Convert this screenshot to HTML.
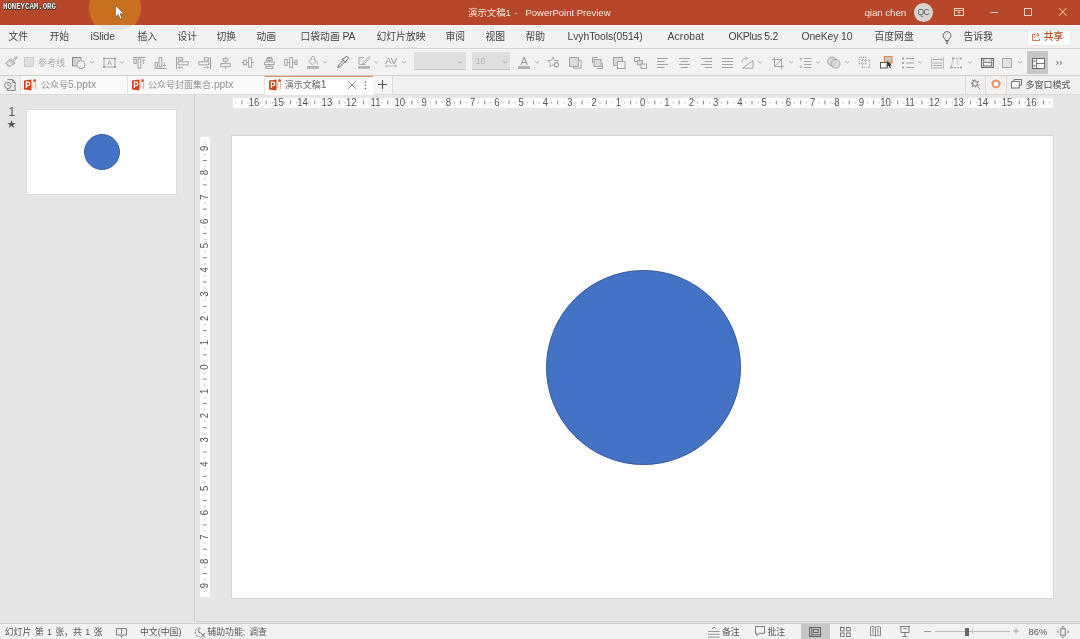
<!DOCTYPE html>
<html lang="zh-CN"><head><meta charset="utf-8"><title>PowerPoint</title>
<style>
*{box-sizing:border-box;margin:0;padding:0}
html,body{width:1080px;height:639px;overflow:hidden;background:#e6e6e6}
body{position:relative;font-family:"Liberation Sans","Noto Sans CJK SC",sans-serif;font-size:9.8px;color:#444}
.a{position:absolute;white-space:nowrap}
#title{left:0;top:0;width:1080px;height:25px;background:#b7472a;overflow:hidden}
#menu{left:0;top:25px;width:1080px;height:24px;background:#f3f2f1;border-bottom:1px solid #d4d2d0}
#tool{left:0;top:49px;width:1080px;height:27px;background:#f3f2f1;border-bottom:1px solid #d0cecc}
#tabs{left:0;top:76px;width:1080px;height:19px;background:#f1f0ef;border-bottom:1px solid #dddbd9}
#status{left:0;top:622.6px;width:1080px;height:17px;background:#f3f2f1;border-top:0.9px solid #d0cecc}
.m{top:5px;line-height:14px;color:#444}
.t{color:#fbe9e2}
svg{position:absolute;overflow:visible}
#root{position:absolute;left:0;top:0;width:1080px;height:639px;will-change:transform}
</style></head><body><div id="root">

<div id="title" class="a">
<div class="a" style="left:89.2px;top:-18.5px;width:52px;height:52px;border-radius:26px;background:#c9701f"></div>
<div class="a" style="left:3px;top:1.8px;font-family:'Liberation Mono',monospace;font-weight:bold;font-size:9.6px;line-height:9px;color:#fff;transform:scaleX(0.765);transform-origin:0 0;text-shadow:0 0 1px #000,0 0 1px #000,0.5px 0.5px 0 #333">HONEYCAM.ORG</div>
<svg style="left:114.6px;top:4.6px" width="10" height="15" viewBox="0 0 10 15"><path d="M0.5 0.5 L0.5 12 L3.2 9.4 L5.2 14 L7 13.2 L5 8.8 L8.8 8.8 Z" fill="#fff" stroke="#555" stroke-width="0.6"/></svg>
<div class="a t" style="left:468px;top:6px;line-height:13px;font-size:9.4px">演示文稿1</div>
<div class="a t" style="left:514.5px;top:6px;line-height:13px;font-size:9.4px">-</div>
<div class="a t" style="left:525.5px;top:6px;line-height:13px;font-size:9.5px">PowerPoint Preview</div>
<div class="a t" style="left:864.5px;top:5.7px;line-height:13px;font-size:9.8px;letter-spacing:-0.1px">qian chen</div>
<div class="a" style="left:914px;top:3px;width:19px;height:19px;border-radius:10px;background:#d8d4d1;color:#5a5a5a;font-size:8.6px;letter-spacing:-0.7px;line-height:19px;text-align:center;text-indent:-0.5px">QC</div>
<svg style="left:954px;top:8px" width="10" height="8" viewBox="0 0 10 8"><rect x="0.5" y="0.5" width="9" height="7" fill="none" stroke="#ecd0c6"/><path d="M0.5 2.5H9.5M5 3.6V6.5M3.6 5L5 3.6L6.4 5" fill="none" stroke="#ecd0c6" stroke-width="0.9"/></svg>
<div class="a" style="left:990px;top:12px;width:8px;height:1px;background:#ecd0c6"></div>
<div class="a" style="left:1024px;top:8px;width:8px;height:8px;border:1px solid #ecd0c6"></div>
<svg style="left:1059.2px;top:8.3px" width="7.6" height="7.6" viewBox="0 0 8 8"><path d="M0 0L8 8M8 0L0 8" stroke="#f2b083" stroke-width="1.1"/></svg>
</div>
<div id="menu" class="a">
<div class="a" style="left:0;top:0;width:200px;height:6px;overflow:hidden"><div class="a" style="left:99px;top:-6px;width:33px;height:11px;border-radius:50%;background:rgba(90,90,100,0.08)"></div></div>
<div class="a m" style="left:8.5px">文件</div>
<div class="a m" style="left:49.5px">开始</div>
<div class="a m" style="left:90.5px;font-size:10.4px;letter-spacing:-0.2px">iSlide</div>
<div class="a m" style="left:137.5px">插入</div>
<div class="a m" style="left:177.5px">设计</div>
<div class="a m" style="left:216.5px">切换</div>
<div class="a m" style="left:256.5px">动画</div>
<div class="a m" style="left:300.5px">口袋动画 <span style="font-size:10.4px">PA</span></div>
<div class="a m" style="left:376.5px">幻灯片放映</div>
<div class="a m" style="left:445.5px">审阅</div>
<div class="a m" style="left:485.5px">视图</div>
<div class="a m" style="left:525.5px">帮助</div>
<div class="a m" style="left:567.5px;font-size:10.4px;letter-spacing:-0.07px">LvyhTools(0514)</div>
<div class="a m" style="left:667.5px;font-size:10.4px;letter-spacing:0.1px">Acrobat</div>
<div class="a m" style="left:728.5px;font-size:10.4px;letter-spacing:-0.32px">OKPlus 5.2</div>
<div class="a m" style="left:801.5px;font-size:10.4px;letter-spacing:-0.13px">OneKey 10</div>
<div class="a m" style="left:874.5px">百度网盘</div>
<div class="a m" style="left:963.5px">告诉我</div>
<svg style="left:942px;top:6px" width="10" height="13" viewBox="0 0 10 13"><path d="M5 0.6a4 4 0 0 0-2.2 7.3c.5.5.7 1 .7 1.6h3c0-.6.2-1.1.7-1.6A4 4 0 0 0 5 .6zM3.5 10.8h3M4 12.3h2" fill="none" stroke="#555" stroke-width="0.9"/></svg>
<div class="a" style="left:1027px;top:3.6px;width:43.5px;height:17px;background:#fff;border:1px solid #ecebe9"></div>
<svg style="left:1032px;top:7.4px" width="9" height="9" viewBox="0 0 9 9"><path d="M3 2.5H0.5V8.5H7.5V6.5M2.5 6C3 4 4.5 2.8 6.5 2.8M5 0.8L7.3 2.8L5 4.8" fill="none" stroke="#d6683c" stroke-width="0.9"/></svg>
<div class="a m" style="left:1043.7px;color:#c24e22;font-weight:500">共享</div>
</div>
<div id="tool" class="a">
<svg style="left:5px;top:7px" width="13" height="12" viewBox="0 0 13 12" fill="none" stroke="#a6a4a2" stroke-width="1" ><path d="M8.2 3.4L11.4 0.6L12.4 1.6L9.6 4.8" fill="#dcdad8"/><path d="M5.4 2.6L10 7L8.6 8.4L4 4Z" fill="#cfcdcb"/><path d="M4 4.2L0.8 7.4L2.4 8L2 9.4L3.6 9.4L4.2 11L8.2 8.2" fill="#e4e2e0"/></svg>
<div class="a" style="left:24px;top:8px;width:10px;height:10px;background:#e1dfdd;border:1px solid #cfcdcb"></div>
<div class="a" style="left:38px;top:7.5px;font-size:9px;line-height:13px;color:#adabaa">参考线</div>
<svg style="left:72px;top:8px" width="14" height="12" viewBox="0 0 14 12" fill="none" stroke="#a6a4a2" stroke-width="1" ><rect x="0.5" y="0.5" width="8.5" height="8.5" fill="#d6d4d2"/><path d="M0.5 9V0.5H9" stroke="#8a8886"/><circle cx="9" cy="7.6" r="4" fill="#f3f2f1"/></svg>
<svg style="left:90px;top:11.600000000000001px" width="4.4" height="2.4" viewBox="0 0 4.4 2.4" fill="none" stroke="#a6a4a2" stroke-width="0.85"><path d="M0.3 0.3L2.2 2.1L4.1 0.3"/></svg>
<svg style="left:103px;top:8px" width="13" height="11" viewBox="0 0 13 11" fill="none" stroke="#a6a4a2" stroke-width="1" ><rect x="1" y="1.5" width="11" height="8.5"/><rect x="0" y="0.5" width="2" height="2" fill="#a6a4a2" stroke="none"/><rect x="11" y="0.5" width="2" height="2" fill="#a6a4a2" stroke="none"/><rect x="0" y="9" width="2" height="2" fill="#a6a4a2" stroke="none"/><rect x="11" y="9" width="2" height="2" fill="#a6a4a2" stroke="none"/><path d="M4.6 8L6.5 3.4L8.4 8M5.3 6.4H7.7" stroke-width="0.8"/></svg>
<svg style="left:120px;top:11.600000000000001px" width="4.4" height="2.4" viewBox="0 0 4.4 2.4" fill="none" stroke="#a6a4a2" stroke-width="0.85"><path d="M0.3 0.3L2.2 2.1L4.1 0.3"/></svg>
<svg style="left:133px;top:8px" width="13" height="12" viewBox="0 0 13 12" fill="none" stroke="#a6a4a2" stroke-width="1" ><path d="M0 0.5H12.5"/><rect x="1" y="2" width="2.2" height="4.5"/><rect x="5" y="2" width="2.8" height="9.2"/><path d="M10.5 7V2.5M9 4L10.5 2.5L12 4" stroke-width="0.8"/></svg>
<svg style="left:154px;top:8px" width="13" height="12" viewBox="0 0 13 12" fill="none" stroke="#a6a4a2" stroke-width="1" ><path d="M0 11.5H12.5"/><rect x="1.2" y="5.5" width="2.2" height="4.5"/><rect x="5" y="0.8" width="2.8" height="9.2"/><path d="M10.5 5V9.5M9 8L10.5 9.5L12 8" stroke-width="0.8"/></svg>
<svg style="left:176px;top:8px" width="13" height="12" viewBox="0 0 13 12" fill="none" stroke="#a6a4a2" stroke-width="1" ><path d="M0.5 0V12"/><rect x="2.2" y="0.8" width="4.5" height="2.4"/><rect x="2.2" y="4.8" width="10" height="3"/><path d="M7 10.5H2.5M4 9L2.5 10.5L4 12" stroke-width="0.8"/></svg>
<svg style="left:198px;top:8px" width="13" height="12" viewBox="0 0 13 12" fill="none" stroke="#a6a4a2" stroke-width="1" ><path d="M12.5 0V12"/><rect x="6.3" y="0.8" width="4.5" height="2.4"/><rect x="0.8" y="4.8" width="10" height="3"/><path d="M6 10.5H10.5M9 9L10.5 10.5L9 12" stroke-width="0.8"/></svg>
<svg style="left:220px;top:8px" width="11" height="12" viewBox="0 0 11 12" fill="none" stroke="#a6a4a2" stroke-width="1" ><path d="M5.5 0V12"/><rect x="3.2" y="1.6" width="4.6" height="2.6" fill="#f3f2f1"/><rect x="0.8" y="6.6" width="9.4" height="3" fill="#f3f2f1"/></svg>
<svg style="left:242px;top:8px" width="12" height="11" viewBox="0 0 12 11" fill="none" stroke="#a6a4a2" stroke-width="1" ><path d="M0 5.5H12"/><rect x="1.8" y="3.2" width="2.6" height="4.6" fill="#f3f2f1"/><rect x="6.6" y="0.8" width="3" height="9.4" fill="#f3f2f1"/></svg>
<svg style="left:264px;top:8px" width="11" height="12" viewBox="0 0 11 12" fill="none" stroke="#a6a4a2" stroke-width="1" ><path d="M5.5 0V12M3 0.5H8"/><rect x="2.6" y="1.8" width="5.6" height="1.8" fill="#f3f2f1"/><rect x="0.6" y="5" width="9.6" height="2.6" fill="#f3f2f1"/><rect x="2" y="9.2" width="7" height="2.2" fill="#f3f2f1"/></svg>
<svg style="left:284px;top:8px" width="14" height="11" viewBox="0 0 14 11" fill="none" stroke="#a6a4a2" stroke-width="1" ><path d="M0.5 5.5H13.5"/><rect x="0.8" y="2.4" width="2.4" height="6" fill="#f3f2f1"/><rect x="5.6" y="0.6" width="3" height="9.8" fill="#f3f2f1"/><rect x="11" y="3.2" width="2" height="4.4" fill="#f3f2f1"/></svg>
<svg style="left:307px;top:7px" width="12" height="13" viewBox="0 0 12 13" fill="none" stroke="#a6a4a2" stroke-width="1" ><rect x="0" y="10" width="12" height="2.8" fill="#b4b2b0" stroke="none"/><path d="M4.6 3.4V1.2C4.6 0.2 7.4 0.2 7.4 1.2V4.2M4.2 2.6L1.8 5.6L5.6 8.8L9.4 5.2L6.8 3.2M9.6 5.4C10.4 6.4 10.6 7.4 10.4 8.6" stroke-width="0.9"/></svg>
<svg style="left:323px;top:11.600000000000001px" width="4.4" height="2.4" viewBox="0 0 4.4 2.4" fill="none" stroke="#a6a4a2" stroke-width="0.85"><path d="M0.3 0.3L2.2 2.1L4.1 0.3"/></svg>
<svg style="left:337px;top:7px" width="12" height="13" viewBox="0 0 12 13" fill="none" stroke="#a6a4a2" stroke-width="1" ><path d="M10.8 1.2C9.8 0.2 8.6 0.6 8 1.4L6.6 3L5.8 2.4L5 3.2L8.6 6.8L9.4 6L8.8 5.2L10.4 3.8C11.4 3 11.6 2 10.8 1.2ZM6 4.4L1.6 9.2L0.8 11.6L3 10.6L7.6 6" stroke="#6a6866" stroke-width="1"/></svg>
<svg style="left:358px;top:7px" width="13" height="13" viewBox="0 0 13 13" fill="none" stroke="#a6a4a2" stroke-width="1" ><rect x="0" y="10" width="12" height="2.8" fill="#b4b2b0" stroke="none"/><path d="M6 1.5H1V8.5H7.5M11.2 0.6L12.2 1.6L6.4 7.6L4.6 8.2L5.2 6.6Z" stroke-width="0.9"/></svg>
<svg style="left:374px;top:11.600000000000001px" width="4.4" height="2.4" viewBox="0 0 4.4 2.4" fill="none" stroke="#a6a4a2" stroke-width="0.85"><path d="M0.3 0.3L2.2 2.1L4.1 0.3"/></svg>
<div class="a" style="left:385.2px;top:6.8px;font-size:9.6px;line-height:10px;color:#979593;letter-spacing:0px">AV</div>
<svg style="left:385px;top:15px" width="12" height="4" viewBox="0 0 12 4" fill="none" stroke="#a6a4a2" stroke-width="1" ><path d="M0.5 2H11.5M2 0.5L0.5 2L2 3.5M10 0.5L11.5 2L10 3.5" stroke-width="0.8"/></svg>
<svg style="left:402px;top:11.600000000000001px" width="4.4" height="2.4" viewBox="0 0 4.4 2.4" fill="none" stroke="#a6a4a2" stroke-width="0.85"><path d="M0.3 0.3L2.2 2.1L4.1 0.3"/></svg>
<div class="a" style="left:414px;top:3px;width:52px;height:18px;background:#e1dfdd;border-bottom:1px solid #c8c6c4"></div>
<svg style="left:458px;top:12.200000000000003px" width="4.4" height="2.4" viewBox="0 0 4.4 2.4" fill="none" stroke="#a6a4a2" stroke-width="0.85"><path d="M0.3 0.3L2.2 2.1L4.1 0.3"/></svg>
<div class="a" style="left:472px;top:3px;width:38px;height:18px;background:#e1dfdd;border-bottom:1px solid #c8c6c4"></div>
<div class="a" style="left:475.6px;top:5.9px;font-size:9.5px;line-height:12px;color:#b5b3b1;letter-spacing:-0.6px">18</div>
<svg style="left:503px;top:12.200000000000003px" width="4.4" height="2.4" viewBox="0 0 4.4 2.4" fill="none" stroke="#a6a4a2" stroke-width="0.85"><path d="M0.3 0.3L2.2 2.1L4.1 0.3"/></svg>
<div class="a" style="left:520.4px;top:6.5px;font-size:11px;line-height:10px;color:#979593">A</div>
<div class="a" style="left:518px;top:17px;width:12px;height:3px;background:#b4b2b0"></div>
<svg style="left:534.5px;top:11.600000000000001px" width="4.4" height="2.4" viewBox="0 0 4.4 2.4" fill="none" stroke="#a6a4a2" stroke-width="0.85"><path d="M0.3 0.3L2.2 2.1L4.1 0.3"/></svg>
<svg style="left:547px;top:7px" width="13" height="12" viewBox="0 0 13 12" fill="none" stroke="#a6a4a2" stroke-width="1" ><path d="M6 0.9L7.5 4.3L11.3 4.6L8.5 7.1L9.4 10.8L6 8.9L2.6 10.8L3.5 7.1L0.7 4.6L4.5 4.3Z" stroke-width="0.9"/><circle cx="9.4" cy="8.8" r="2.1" fill="#f3f2f1" stroke-width="1.1"/></svg>
<svg style="left:569px;top:8px" width="13" height="12" viewBox="0 0 13 12" fill="none" stroke="#a6a4a2" stroke-width="1" ><path d="M10 3.5H12.2V11.2H4.5V9.5"/><rect x="0.5" y="0.5" width="9" height="9" fill="#dcdad8"/></svg>
<svg style="left:591px;top:8px" width="13" height="12" viewBox="0 0 13 12" fill="none" stroke="#a6a4a2" stroke-width="1" ><path d="M1.5 6V0.5H7M11.5 6V11.5H6"/><rect x="3" y="2.5" width="7" height="7" fill="#dcdad8"/></svg>
<svg style="left:613px;top:8px" width="13" height="12" viewBox="0 0 13 12" fill="none" stroke="#a6a4a2" stroke-width="1" ><rect x="0.5" y="0.5" width="9" height="8" fill="#dcdad8"/><rect x="4.5" y="4.5" width="7.5" height="7" fill="#f3f2f1"/></svg>
<svg style="left:634px;top:8px" width="13" height="12" viewBox="0 0 13 12" fill="none" stroke="#a6a4a2" stroke-width="1" ><rect x="0.5" y="0.5" width="5" height="4" fill="#f3f2f1"/><rect x="3.5" y="3.5" width="5" height="4.5" fill="#dcdad8"/><rect x="7" y="7" width="5.5" height="4.5" fill="#f3f2f1"/></svg>
<svg style="left:657px;top:8px" width="11" height="12" viewBox="0 0 11 12" fill="none" stroke="#a6a4a2" stroke-width="1" ><path d="M0 1.5H11"/><path d="M0 4.5H7.5"/><path d="M0 7.5H11"/><path d="M0 10.5H7.5"/></svg>
<svg style="left:679px;top:8px" width="11" height="12" viewBox="0 0 11 12" fill="none" stroke="#a6a4a2" stroke-width="1" ><path d="M0 1.5H11"/><path d="M1.8 4.5H9.2"/><path d="M0 7.5H11"/><path d="M1.8 10.5H9.2"/></svg>
<svg style="left:701px;top:8px" width="11" height="12" viewBox="0 0 11 12" fill="none" stroke="#a6a4a2" stroke-width="1" ><path d="M0 1.5H11"/><path d="M3.5 4.5H11"/><path d="M0 7.5H11"/><path d="M3.5 10.5H11"/></svg>
<svg style="left:722px;top:8px" width="11" height="12" viewBox="0 0 11 12" fill="none" stroke="#a6a4a2" stroke-width="1" ><path d="M0 1.5H11"/><path d="M0 4.5H11"/><path d="M0 7.5H11"/><path d="M0 10.5H11"/></svg>
<svg style="left:741px;top:7px" width="13" height="13" viewBox="0 0 13 13" fill="none" stroke="#a6a4a2" stroke-width="1" ><path d="M1.5 12.2H12V4.6Z"/><path d="M1.2 6.2C0.8 3.6 3 1.8 6 2.4M4.6 0.6L6.4 2.4L4.6 4.2" stroke-width="0.9"/></svg>
<svg style="left:758px;top:11.600000000000001px" width="4.4" height="2.4" viewBox="0 0 4.4 2.4" fill="none" stroke="#a6a4a2" stroke-width="0.85"><path d="M0.3 0.3L2.2 2.1L4.1 0.3"/></svg>
<svg style="left:772px;top:7.700000000000003px" width="12" height="13" viewBox="0 0 12 13" fill="none" stroke="#a6a4a2" stroke-width="1" ><path d="M2.5 0V9.5H12M0 2.5H9.5V12.5M10.8 1L2.8 9.2"/></svg>
<svg style="left:788.5px;top:11.600000000000001px" width="4.4" height="2.4" viewBox="0 0 4.4 2.4" fill="none" stroke="#a6a4a2" stroke-width="0.85"><path d="M0.3 0.3L2.2 2.1L4.1 0.3"/></svg>
<svg style="left:799px;top:8px" width="13" height="12" viewBox="0 0 13 12" fill="none" stroke="#a6a4a2" stroke-width="1" ><path d="M5 1.5H12.5M5 4.5H12.5M5 7.5H12.5M5 10.5H12.5"/><path d="M2 1V4M0.6 2.4L2 1L3.4 2.4M2 8V11M0.6 9.6L2 11L3.4 9.6" stroke-width="0.8"/></svg>
<svg style="left:816px;top:11.600000000000001px" width="4.4" height="2.4" viewBox="0 0 4.4 2.4" fill="none" stroke="#a6a4a2" stroke-width="0.85"><path d="M0.3 0.3L2.2 2.1L4.1 0.3"/></svg>
<svg style="left:827px;top:7px" width="14" height="13" viewBox="0 0 14 13" fill="none" stroke="#a6a4a2" stroke-width="1" ><circle cx="5" cy="5.4" r="4.4" fill="#dcdad8"/><circle cx="8.6" cy="7.8" r="4.4" fill="#dcdad8" fill-opacity="0.7"/></svg>
<svg style="left:844.5px;top:11.600000000000001px" width="4.4" height="2.4" viewBox="0 0 4.4 2.4" fill="none" stroke="#a6a4a2" stroke-width="0.85"><path d="M0.3 0.3L2.2 2.1L4.1 0.3"/></svg>
<svg style="left:858px;top:7px" width="13" height="13" viewBox="0 0 13 13" fill="none" stroke="#a6a4a2" stroke-width="1" ><path d="M0.5 1.5H8.5M1.5 0.5V8.5M7.5 0.5V8.5M0.5 7.5H8.5M3.5 4.5H12.5M4.5 3.5V12.5M11.5 3.5V12.5M3.5 11.5H12.5" stroke-dasharray="1.3 0.9" stroke-width="0.9"/></svg>
<svg style="left:880px;top:7px" width="13" height="13" viewBox="0 0 13 13" fill="none" stroke="#a6a4a2" stroke-width="1" ><rect x="4.5" y="0.5" width="7.5" height="6.5" fill="#c9c7c5" stroke="#e07f4f"/><rect x="0.5" y="6.5" width="6.5" height="5.5" fill="#fff" stroke="#555"/><path d="M7.2 4.6V11.4L8.8 9.8L9.9 12.2L11 11.7L9.9 9.4H12Z" fill="#333" stroke="none"/></svg>
<svg style="left:902px;top:8px" width="12" height="12" viewBox="0 0 12 12" fill="none" stroke="#a6a4a2" stroke-width="1" ><rect x="0" y="0.5" width="2" height="2" fill="#a6a4a2" stroke="none"/><rect x="0" y="5" width="2" height="2" fill="#a6a4a2" stroke="none"/><rect x="0" y="9.5" width="2" height="2" fill="#a6a4a2" stroke="none"/><path d="M4 1.5H12M4 6H12M4 10.5H12"/></svg>
<svg style="left:918px;top:11.600000000000001px" width="4.4" height="2.4" viewBox="0 0 4.4 2.4" fill="none" stroke="#a6a4a2" stroke-width="0.85"><path d="M0.3 0.3L2.2 2.1L4.1 0.3"/></svg>
<svg style="left:931px;top:8px" width="13" height="12" viewBox="0 0 13 12" fill="none" stroke="#a6a4a2" stroke-width="1" ><path d="M0.5 0V12M12.5 0V12" stroke="#c0bebc"/><path d="M1.5 2.5H11.5M2.5 1.5V3.5M10.5 1.5V3.5M1.5 6H11.5M1.5 8.5H11.5M1.5 11H11.5" stroke-width="0.9"/></svg>
<svg style="left:950px;top:8px" width="13" height="12" viewBox="0 0 13 12" fill="none" stroke="#a6a4a2" stroke-width="1" ><path d="M3 1.5L1.2 10.5H10.8M3 1.5H10.5M8.5 3C7 4.5 7 6.5 8.5 8" stroke-dasharray="2 1" stroke-width="0.9"/><rect x="2" y="0.5" width="2" height="2" fill="#a6a4a2" stroke="none"/><rect x="9.8" y="0.5" width="2" height="2" fill="#a6a4a2" stroke="none"/><rect x="0.2" y="9.5" width="2" height="2" fill="#a6a4a2" stroke="none"/><rect x="10" y="9.5" width="2" height="2" fill="#a6a4a2" stroke="none"/></svg>
<svg style="left:967.5px;top:11.600000000000001px" width="4.4" height="2.4" viewBox="0 0 4.4 2.4" fill="none" stroke="#a6a4a2" stroke-width="0.85"><path d="M0.3 0.3L2.2 2.1L4.1 0.3"/></svg>
<svg style="left:981px;top:9px" width="13" height="10" viewBox="0 0 13 10" fill="none" stroke="#a6a4a2" stroke-width="1" ><rect x="0.5" y="0.5" width="12" height="9" fill="#e4e2e0" stroke="#5a5856" stroke-width="0.85"/><rect x="2.3" y="4.3" width="8.4" height="3.6" fill="#fff" stroke="#5a5856" stroke-width="0.8"/><rect x="1.6" y="1.6" width="1.6" height="1.4" fill="#3a66c4" stroke="none"/><rect x="9.8" y="1.6" width="1.6" height="1.4" fill="#3a66c4" stroke="none"/></svg>
<div class="a" style="left:1002px;top:9px;width:10px;height:10px;background:#e4e2e0;border:1px solid #a8a6a4"></div>
<svg style="left:1017.5px;top:11.600000000000001px" width="4.4" height="2.4" viewBox="0 0 4.4 2.4" fill="none" stroke="#a6a4a2" stroke-width="0.85"><path d="M0.3 0.3L2.2 2.1L4.1 0.3"/></svg>
<div class="a" style="left:1027px;top:1.5px;width:21px;height:23px;background:#c8c6c4"></div>
<svg style="left:1032px;top:9px" width="13" height="11" viewBox="0 0 13 11" fill="none" stroke="#a6a4a2" stroke-width="1" ><rect x="0.5" y="0.5" width="12" height="10" fill="#fff" stroke="#5a5856" stroke-width="0.85"/><path d="M4.5 0.5V10.5M4.5 5.5H12.5" stroke="#5a5856" stroke-width="0.8"/><rect x="1.7" y="2.2" width="1.6" height="1.6" fill="#3a66c4" stroke="none"/><rect x="1.7" y="7" width="1.6" height="1.6" fill="#3a66c4" stroke="none"/></svg>
<svg style="left:1056px;top:12px" width="7" height="4" viewBox="0 0 7 4" fill="none" stroke="#a6a4a2" stroke-width="1" ><path d="M0.4 0.2L2.4 2L0.4 3.8M3.8 0.2L5.8 2L3.8 3.8" stroke="#555" stroke-width="0.9"/></svg>
</div>
<div id="tabs" class="a">
<svg style="left:4px;top:3px" width="12" height="12" viewBox="0 0 12 12" fill="none" stroke="#77756f" stroke-width="0.9"><path d="M3.5 0.6H8.6L11.2 3.2V11.4H3.5V9.6M8.4 0.8V3.4H11"/><circle cx="3.9" cy="6.4" r="3.2" fill="#f1f0ef"/><path d="M3.9 4.6V6.6H5.4"/></svg>
<div class="a" style="left:20px;top:0;width:108px;height:18px;background:#fafafa;border-left:1px solid #e4e2e0;border-right:1px solid #e4e2e0"></div>
<div class="a" style="left:128px;top:0;width:137px;height:18px;background:#fafafa;border-right:1px solid #e4e2e0"></div>
<svg style="left:24px;top:3px" width="13" height="12" viewBox="0 0 13 12"><rect x="6" y="2" width="5.8" height="8.2" fill="#fdf6f3"/><path d="M11.7 2.6V10.2" stroke="#e9906a" stroke-width="0.8" fill="none"/><path d="M7 4.6H9.6M7 6.4H9.6M7 8.2H9.6" stroke="#f0b49c" stroke-width="0.9" fill="none"/><circle cx="10.6" cy="1.4" r="1.5" fill="#e4572e"/><path d="M0 1.4L7.4 0.4V11.6L0 10.6Z" fill="#d6431f"/><path d="M2.4 9V3.2H4.3C6.3 3.2 6.3 6.5 4.3 6.5H2.6" fill="none" stroke="#fff" stroke-width="1.25"/></svg>
<div class="a" style="left:41px;top:3px;font-size:9px;line-height:12px;color:#93918f">公众号<span style="font-size:10.3px">5.pptx</span></div>
<svg style="left:132px;top:3px" width="13" height="12" viewBox="0 0 13 12"><rect x="6" y="2" width="5.8" height="8.2" fill="#fdf6f3"/><path d="M11.7 2.6V10.2" stroke="#e9906a" stroke-width="0.8" fill="none"/><path d="M7 4.6H9.6M7 6.4H9.6M7 8.2H9.6" stroke="#f0b49c" stroke-width="0.9" fill="none"/><circle cx="10.6" cy="1.4" r="1.5" fill="#e4572e"/><path d="M0 1.4L7.4 0.4V11.6L0 10.6Z" fill="#d6431f"/><path d="M2.4 9V3.2H4.3C6.3 3.2 6.3 6.5 4.3 6.5H2.6" fill="none" stroke="#fff" stroke-width="1.25"/></svg>
<div class="a" style="left:148px;top:3px;font-size:9px;line-height:12px;color:#93918f">公众号封面集合<span style="font-size:10.3px">.pptx</span></div>
<div class="a" style="left:265px;top:-0.2px;width:108px;height:19.2px;background:#fff;border-top:1.4px solid #e58b62"></div>
<svg style="left:269px;top:3px" width="13" height="12" viewBox="0 0 13 12"><rect x="6" y="2" width="5.8" height="8.2" fill="#fdf6f3"/><path d="M11.7 2.6V10.2" stroke="#e9906a" stroke-width="0.8" fill="none"/><path d="M7 4.6H9.6M7 6.4H9.6M7 8.2H9.6" stroke="#f0b49c" stroke-width="0.9" fill="none"/><circle cx="10.6" cy="1.4" r="1.5" fill="#e4572e"/><path d="M0 1.4L7.4 0.4V11.6L0 10.6Z" fill="#d6431f"/><path d="M2.4 9V3.2H4.3C6.3 3.2 6.3 6.5 4.3 6.5H2.6" fill="none" stroke="#fff" stroke-width="1.25"/></svg>
<div class="a" style="left:284.8px;top:3px;font-size:9px;line-height:12px;color:#626060">演示文稿<span style="font-size:10.3px">1</span></div>
<svg style="left:348px;top:5px" width="8" height="8" viewBox="0 0 8 8"><path d="M0.3 0.3L7.7 7.7M7.7 0.3L0.3 7.7" stroke="#777" stroke-width="0.9"/></svg>
<svg style="left:364px;top:5px" width="3" height="9" viewBox="0 0 3 9" fill="#666"><rect x="0.8" y="0.4" width="1.3" height="1.3"/><rect x="0.8" y="3.6" width="1.3" height="1.3"/><rect x="0.8" y="6.8" width="1.3" height="1.3"/></svg>
<div class="a" style="left:373px;top:0;width:20px;height:18px;background:#f6f5f4;border-right:1px solid #dddbd9"></div>
<svg style="left:378px;top:4px" width="9" height="9" viewBox="0 0 9 9"><path d="M4.5 0V9M0 4.5H9" stroke="#555" stroke-width="1.1"/></svg>
<div class="a" style="left:965px;top:0;width:1px;height:18px;background:#dcdad8"></div>
<div class="a" style="left:985px;top:0;width:1px;height:18px;background:#dcdad8"></div>
<div class="a" style="left:1006px;top:0;width:1px;height:18px;background:#dcdad8"></div>
<svg style="left:970px;top:3px" width="11" height="11" viewBox="0 0 11 11" fill="none" stroke="#77756f" stroke-width="0.9"><path d="M2.6 0.8L3.4 3L1 4.4L3.2 5L2.2 7.6L4.6 6.4L5.4 8.2L6.4 6L8.6 6.2L7 4.4L8.4 2.4L5.8 2.8L4.8 0.6L3.8 2.6ZM6.4 6.4L10.4 10.4" /></svg>
<svg style="left:991px;top:3px" width="10" height="10" viewBox="0 0 10 10"><path d="M5 0.4L8.2 1.4L9.6 4.6L8.4 8L5 9.6L1.6 8L0.4 4.6L1.8 1.4Z" fill="#e58a5c"/><circle cx="5" cy="5" r="2.5" fill="#fff"/></svg>
<svg style="left:1011px;top:3px" width="11" height="10" viewBox="0 0 11 10" fill="none" stroke="#66645f" stroke-width="0.9"><path d="M3 2.4V0.5H10.5V6.2H8.4"/><rect x="0.5" y="2.6" width="7.8" height="6.4" fill="#fff"/></svg>
<div class="a" style="left:1025.5px;top:2.5px;font-size:9px;line-height:12px;color:#55534f">多窗口模式</div>
</div>
<div class="a" style="left:194px;top:95px;width:1px;height:526px;background:#cfcdcb"></div>
<div class="a" style="left:196px;top:620.6px;width:884px;height:1px;background:#d2cfcc"></div>
<div class="a" style="left:8.5px;top:105px;font-size:12px;line-height:14px;color:#555">1</div>
<div class="a" style="left:7px;top:118px;font-size:9px;line-height:12px;color:#555">★</div>
<div class="a" style="left:26px;top:109px;width:151px;height:86px;background:#fff;border:1px solid #dcdcdc"></div>
<div class="a" style="left:84px;top:134px;width:36px;height:36px;border-radius:50%;background:#4472c4;border:0.5px solid #3a5e9e"></div>
<div class="a" style="left:233px;top:98px;width:820px;height:10px;background:#fdfdfd"></div>
<div class="a" style="left:200px;top:137px;width:10px;height:460px;background:#fdfdfd"></div>
<svg style="left:0;top:0" width="1080" height="639" viewBox="0 0 1080 639" font-family="Liberation Sans, sans-serif" font-size="10.4" fill="#525252" text-anchor="middle">
<rect x="235.3" y="102.2" width="1" height="1" fill="#999"/>
<rect x="241.4" y="100.5" width="1" height="4" fill="#858585"/>
<rect x="247.5" y="102.2" width="1" height="1" fill="#999"/>
<text transform="translate(254.1 106.3) scale(0.92 1)">16</text>
<rect x="259.6" y="102.2" width="1" height="1" fill="#999"/>
<rect x="265.7" y="100.5" width="1" height="4" fill="#858585"/>
<rect x="271.8" y="102.2" width="1" height="1" fill="#999"/>
<text transform="translate(278.4 106.3) scale(0.92 1)">15</text>
<rect x="283.9" y="102.2" width="1" height="1" fill="#999"/>
<rect x="290.0" y="100.5" width="1" height="4" fill="#858585"/>
<rect x="296.1" y="102.2" width="1" height="1" fill="#999"/>
<text transform="translate(302.6 106.3) scale(0.92 1)">14</text>
<rect x="308.2" y="102.2" width="1" height="1" fill="#999"/>
<rect x="314.3" y="100.5" width="1" height="4" fill="#858585"/>
<rect x="320.4" y="102.2" width="1" height="1" fill="#999"/>
<text transform="translate(326.9 106.3) scale(0.92 1)">13</text>
<rect x="332.5" y="102.2" width="1" height="1" fill="#999"/>
<rect x="338.6" y="100.5" width="1" height="4" fill="#858585"/>
<rect x="344.6" y="102.2" width="1" height="1" fill="#999"/>
<text transform="translate(351.2 106.3) scale(0.92 1)">12</text>
<rect x="356.8" y="102.2" width="1" height="1" fill="#999"/>
<rect x="362.9" y="100.5" width="1" height="4" fill="#858585"/>
<rect x="368.9" y="102.2" width="1" height="1" fill="#999"/>
<text transform="translate(375.5 106.3) scale(0.92 1)">11</text>
<rect x="381.1" y="102.2" width="1" height="1" fill="#999"/>
<rect x="387.2" y="100.5" width="1" height="4" fill="#858585"/>
<rect x="393.2" y="102.2" width="1" height="1" fill="#999"/>
<text transform="translate(399.8 106.3) scale(0.92 1)">10</text>
<rect x="405.4" y="102.2" width="1" height="1" fill="#999"/>
<rect x="411.4" y="100.5" width="1" height="4" fill="#858585"/>
<rect x="417.5" y="102.2" width="1" height="1" fill="#999"/>
<text transform="translate(424.1 106.3) scale(0.92 1)">9</text>
<rect x="429.7" y="102.2" width="1" height="1" fill="#999"/>
<rect x="435.7" y="100.5" width="1" height="4" fill="#858585"/>
<rect x="441.8" y="102.2" width="1" height="1" fill="#999"/>
<text transform="translate(448.4 106.3) scale(0.92 1)">8</text>
<rect x="454.0" y="102.2" width="1" height="1" fill="#999"/>
<rect x="460.0" y="100.5" width="1" height="4" fill="#858585"/>
<rect x="466.1" y="102.2" width="1" height="1" fill="#999"/>
<text transform="translate(472.7 106.3) scale(0.92 1)">7</text>
<rect x="478.2" y="102.2" width="1" height="1" fill="#999"/>
<rect x="484.3" y="100.5" width="1" height="4" fill="#858585"/>
<rect x="490.4" y="102.2" width="1" height="1" fill="#999"/>
<text transform="translate(497.0 106.3) scale(0.92 1)">6</text>
<rect x="502.5" y="102.2" width="1" height="1" fill="#999"/>
<rect x="508.6" y="100.5" width="1" height="4" fill="#858585"/>
<rect x="514.7" y="102.2" width="1" height="1" fill="#999"/>
<text transform="translate(521.2 106.3) scale(0.92 1)">5</text>
<rect x="526.8" y="102.2" width="1" height="1" fill="#999"/>
<rect x="532.9" y="100.5" width="1" height="4" fill="#858585"/>
<rect x="539.0" y="102.2" width="1" height="1" fill="#999"/>
<text transform="translate(545.5 106.3) scale(0.92 1)">4</text>
<rect x="551.1" y="102.2" width="1" height="1" fill="#999"/>
<rect x="557.2" y="100.5" width="1" height="4" fill="#858585"/>
<rect x="563.3" y="102.2" width="1" height="1" fill="#999"/>
<text transform="translate(569.8 106.3) scale(0.92 1)">3</text>
<rect x="575.4" y="102.2" width="1" height="1" fill="#999"/>
<rect x="581.5" y="100.5" width="1" height="4" fill="#858585"/>
<rect x="587.5" y="102.2" width="1" height="1" fill="#999"/>
<text transform="translate(594.1 106.3) scale(0.92 1)">2</text>
<rect x="599.7" y="102.2" width="1" height="1" fill="#999"/>
<rect x="605.8" y="100.5" width="1" height="4" fill="#858585"/>
<rect x="611.8" y="102.2" width="1" height="1" fill="#999"/>
<text transform="translate(618.4 106.3) scale(0.92 1)">1</text>
<rect x="624.0" y="102.2" width="1" height="1" fill="#999"/>
<rect x="630.1" y="100.5" width="1" height="4" fill="#858585"/>
<rect x="636.1" y="102.2" width="1" height="1" fill="#999"/>
<text transform="translate(642.7 106.3) scale(0.92 1)">0</text>
<rect x="648.3" y="102.2" width="1" height="1" fill="#999"/>
<rect x="654.3" y="100.5" width="1" height="4" fill="#858585"/>
<rect x="660.4" y="102.2" width="1" height="1" fill="#999"/>
<text transform="translate(667.0 106.3) scale(0.92 1)">1</text>
<rect x="672.6" y="102.2" width="1" height="1" fill="#999"/>
<rect x="678.6" y="100.5" width="1" height="4" fill="#858585"/>
<rect x="684.7" y="102.2" width="1" height="1" fill="#999"/>
<text transform="translate(691.3 106.3) scale(0.92 1)">2</text>
<rect x="696.9" y="102.2" width="1" height="1" fill="#999"/>
<rect x="702.9" y="100.5" width="1" height="4" fill="#858585"/>
<rect x="709.0" y="102.2" width="1" height="1" fill="#999"/>
<text transform="translate(715.6 106.3) scale(0.92 1)">3</text>
<rect x="721.1" y="102.2" width="1" height="1" fill="#999"/>
<rect x="727.2" y="100.5" width="1" height="4" fill="#858585"/>
<rect x="733.3" y="102.2" width="1" height="1" fill="#999"/>
<text transform="translate(739.9 106.3) scale(0.92 1)">4</text>
<rect x="745.4" y="102.2" width="1" height="1" fill="#999"/>
<rect x="751.5" y="100.5" width="1" height="4" fill="#858585"/>
<rect x="757.6" y="102.2" width="1" height="1" fill="#999"/>
<text transform="translate(764.2 106.3) scale(0.92 1)">5</text>
<rect x="769.7" y="102.2" width="1" height="1" fill="#999"/>
<rect x="775.8" y="100.5" width="1" height="4" fill="#858585"/>
<rect x="781.9" y="102.2" width="1" height="1" fill="#999"/>
<text transform="translate(788.4 106.3) scale(0.92 1)">6</text>
<rect x="794.0" y="102.2" width="1" height="1" fill="#999"/>
<rect x="800.1" y="100.5" width="1" height="4" fill="#858585"/>
<rect x="806.2" y="102.2" width="1" height="1" fill="#999"/>
<text transform="translate(812.7 106.3) scale(0.92 1)">7</text>
<rect x="818.3" y="102.2" width="1" height="1" fill="#999"/>
<rect x="824.4" y="100.5" width="1" height="4" fill="#858585"/>
<rect x="830.4" y="102.2" width="1" height="1" fill="#999"/>
<text transform="translate(837.0 106.3) scale(0.92 1)">8</text>
<rect x="842.6" y="102.2" width="1" height="1" fill="#999"/>
<rect x="848.7" y="100.5" width="1" height="4" fill="#858585"/>
<rect x="854.7" y="102.2" width="1" height="1" fill="#999"/>
<text transform="translate(861.3 106.3) scale(0.92 1)">9</text>
<rect x="866.9" y="102.2" width="1" height="1" fill="#999"/>
<rect x="873.0" y="100.5" width="1" height="4" fill="#858585"/>
<rect x="879.0" y="102.2" width="1" height="1" fill="#999"/>
<text transform="translate(885.6 106.3) scale(0.92 1)">10</text>
<rect x="891.2" y="102.2" width="1" height="1" fill="#999"/>
<rect x="897.2" y="100.5" width="1" height="4" fill="#858585"/>
<rect x="903.3" y="102.2" width="1" height="1" fill="#999"/>
<text transform="translate(909.9 106.3) scale(0.92 1)">11</text>
<rect x="915.5" y="102.2" width="1" height="1" fill="#999"/>
<rect x="921.5" y="100.5" width="1" height="4" fill="#858585"/>
<rect x="927.6" y="102.2" width="1" height="1" fill="#999"/>
<text transform="translate(934.2 106.3) scale(0.92 1)">12</text>
<rect x="939.8" y="102.2" width="1" height="1" fill="#999"/>
<rect x="945.8" y="100.5" width="1" height="4" fill="#858585"/>
<rect x="951.9" y="102.2" width="1" height="1" fill="#999"/>
<text transform="translate(958.5 106.3) scale(0.92 1)">13</text>
<rect x="964.0" y="102.2" width="1" height="1" fill="#999"/>
<rect x="970.1" y="100.5" width="1" height="4" fill="#858585"/>
<rect x="976.2" y="102.2" width="1" height="1" fill="#999"/>
<text transform="translate(982.8 106.3) scale(0.92 1)">14</text>
<rect x="988.3" y="102.2" width="1" height="1" fill="#999"/>
<rect x="994.4" y="100.5" width="1" height="4" fill="#858585"/>
<rect x="1000.5" y="102.2" width="1" height="1" fill="#999"/>
<text transform="translate(1007.0 106.3) scale(0.92 1)">15</text>
<rect x="1012.6" y="102.2" width="1" height="1" fill="#999"/>
<rect x="1018.7" y="100.5" width="1" height="4" fill="#858585"/>
<rect x="1024.8" y="102.2" width="1" height="1" fill="#999"/>
<text transform="translate(1031.3 106.3) scale(0.92 1)">16</text>
<rect x="1036.9" y="102.2" width="1" height="1" fill="#999"/>
<rect x="1043.0" y="100.5" width="1" height="4" fill="#858585"/>
<rect x="1049.1" y="102.2" width="1" height="1" fill="#999"/>
<rect x="204.4" y="141.8" width="1" height="1" fill="#999"/>
<text transform="translate(208 148.4) rotate(-90) scale(0.92 1)">9</text>
<rect x="204.4" y="154.0" width="1" height="1" fill="#999"/>
<rect x="202.8" y="160.0" width="4" height="1" fill="#858585"/>
<rect x="204.4" y="166.1" width="1" height="1" fill="#999"/>
<text transform="translate(208 172.7) rotate(-90) scale(0.92 1)">8</text>
<rect x="204.4" y="178.3" width="1" height="1" fill="#999"/>
<rect x="202.8" y="184.3" width="4" height="1" fill="#858585"/>
<rect x="204.4" y="190.4" width="1" height="1" fill="#999"/>
<text transform="translate(208 197.0) rotate(-90) scale(0.92 1)">7</text>
<rect x="204.4" y="202.5" width="1" height="1" fill="#999"/>
<rect x="202.8" y="208.6" width="4" height="1" fill="#858585"/>
<rect x="204.4" y="214.7" width="1" height="1" fill="#999"/>
<text transform="translate(208 221.3) rotate(-90) scale(0.92 1)">6</text>
<rect x="204.4" y="226.8" width="1" height="1" fill="#999"/>
<rect x="202.8" y="232.9" width="4" height="1" fill="#858585"/>
<rect x="204.4" y="239.0" width="1" height="1" fill="#999"/>
<text transform="translate(208 245.6) rotate(-90) scale(0.92 1)">5</text>
<rect x="204.4" y="251.1" width="1" height="1" fill="#999"/>
<rect x="202.8" y="257.2" width="4" height="1" fill="#858585"/>
<rect x="204.4" y="263.3" width="1" height="1" fill="#999"/>
<text transform="translate(208 269.8) rotate(-90) scale(0.92 1)">4</text>
<rect x="204.4" y="275.4" width="1" height="1" fill="#999"/>
<rect x="202.8" y="281.5" width="4" height="1" fill="#858585"/>
<rect x="204.4" y="287.6" width="1" height="1" fill="#999"/>
<text transform="translate(208 294.1) rotate(-90) scale(0.92 1)">3</text>
<rect x="204.4" y="299.7" width="1" height="1" fill="#999"/>
<rect x="202.8" y="305.8" width="4" height="1" fill="#858585"/>
<rect x="204.4" y="311.8" width="1" height="1" fill="#999"/>
<text transform="translate(208 318.4) rotate(-90) scale(0.92 1)">2</text>
<rect x="204.4" y="324.0" width="1" height="1" fill="#999"/>
<rect x="202.8" y="330.1" width="4" height="1" fill="#858585"/>
<rect x="204.4" y="336.1" width="1" height="1" fill="#999"/>
<text transform="translate(208 342.7) rotate(-90) scale(0.92 1)">1</text>
<rect x="204.4" y="348.3" width="1" height="1" fill="#999"/>
<rect x="202.8" y="354.4" width="4" height="1" fill="#858585"/>
<rect x="204.4" y="360.4" width="1" height="1" fill="#999"/>
<text transform="translate(208 367.0) rotate(-90) scale(0.92 1)">0</text>
<rect x="204.4" y="372.6" width="1" height="1" fill="#999"/>
<rect x="202.8" y="378.6" width="4" height="1" fill="#858585"/>
<rect x="204.4" y="384.7" width="1" height="1" fill="#999"/>
<text transform="translate(208 391.3) rotate(-90) scale(0.92 1)">1</text>
<rect x="204.4" y="396.9" width="1" height="1" fill="#999"/>
<rect x="202.8" y="402.9" width="4" height="1" fill="#858585"/>
<rect x="204.4" y="409.0" width="1" height="1" fill="#999"/>
<text transform="translate(208 415.6) rotate(-90) scale(0.92 1)">2</text>
<rect x="204.4" y="421.2" width="1" height="1" fill="#999"/>
<rect x="202.8" y="427.2" width="4" height="1" fill="#858585"/>
<rect x="204.4" y="433.3" width="1" height="1" fill="#999"/>
<text transform="translate(208 439.9) rotate(-90) scale(0.92 1)">3</text>
<rect x="204.4" y="445.4" width="1" height="1" fill="#999"/>
<rect x="202.8" y="451.5" width="4" height="1" fill="#858585"/>
<rect x="204.4" y="457.6" width="1" height="1" fill="#999"/>
<text transform="translate(208 464.2) rotate(-90) scale(0.92 1)">4</text>
<rect x="204.4" y="469.7" width="1" height="1" fill="#999"/>
<rect x="202.8" y="475.8" width="4" height="1" fill="#858585"/>
<rect x="204.4" y="481.9" width="1" height="1" fill="#999"/>
<text transform="translate(208 488.4) rotate(-90) scale(0.92 1)">5</text>
<rect x="204.4" y="494.0" width="1" height="1" fill="#999"/>
<rect x="202.8" y="500.1" width="4" height="1" fill="#858585"/>
<rect x="204.4" y="506.2" width="1" height="1" fill="#999"/>
<text transform="translate(208 512.7) rotate(-90) scale(0.92 1)">6</text>
<rect x="204.4" y="518.3" width="1" height="1" fill="#999"/>
<rect x="202.8" y="524.4" width="4" height="1" fill="#858585"/>
<rect x="204.4" y="530.5" width="1" height="1" fill="#999"/>
<text transform="translate(208 537.0) rotate(-90) scale(0.92 1)">7</text>
<rect x="204.4" y="542.6" width="1" height="1" fill="#999"/>
<rect x="202.8" y="548.7" width="4" height="1" fill="#858585"/>
<rect x="204.4" y="554.7" width="1" height="1" fill="#999"/>
<text transform="translate(208 561.3) rotate(-90) scale(0.92 1)">8</text>
<rect x="204.4" y="566.9" width="1" height="1" fill="#999"/>
<rect x="202.8" y="573.0" width="4" height="1" fill="#858585"/>
<rect x="204.4" y="579.0" width="1" height="1" fill="#999"/>
<text transform="translate(208 585.6) rotate(-90) scale(0.92 1)">9</text>
<rect x="204.4" y="591.2" width="1" height="1" fill="#999"/>
</svg>
<div class="a" style="left:231px;top:135px;width:823px;height:464px;background:#fff;border:1px solid #d8d6d4"></div>
<div class="a" style="left:546px;top:270px;width:195px;height:195px;border-radius:50%;background:#4472c4;border:1px solid #35569a"></div>
<div id="status" class="a">
<div class="a" style="top:2.6px;left:4.7px;font-size:8.9px;line-height:13px;color:#555;word-spacing:0.9px">幻灯片 第 1 张，共 1 张</div>
<svg style="left:116px;top:4.5px" width="11" height="10" viewBox="0 0 11 10" fill="none" stroke="#6e6c6a" stroke-width="0.9"><path d="M0.5 0.6H10.5V7H6.6L5.6 9L4.6 7H0.5ZM5.6 0.8V6.6"/></svg>
<div class="a" style="top:2.6px;left:140px;font-size:8.9px;line-height:13px;color:#555;">中文(中国)</div>
<svg style="left:194px;top:3.5px" width="12" height="11" viewBox="0 0 12 11" fill="none" stroke="#6e6c6a" stroke-width="0.9"><path d="M6.4 1.2A4.2 4.2 0 1 0 6.2 9.4" stroke-dasharray="2.4 1"/><path d="M4.8 2.4V5.6H6.6M7 6L11 10.6M11 6L7 10.6" stroke-width="1"/></svg>
<div class="a" style="top:2.6px;left:207.3px;font-size:8.9px;line-height:13px;color:#555;word-spacing:1.4px">辅助功能: 调查</div>
<svg style="left:708.3px;top:2px" width="12" height="12" viewBox="0 0 12 12" fill="none" stroke="#8e8c8a" stroke-width="0.9"><path d="M4.2 2.9L6 1L7.8 2.9" stroke="#6e6c6a"/><path d="M0 5.5H11.7M0 8.3H11.7M0 11.1H11.7"/></svg>
<div class="a" style="top:2.6px;left:722px;font-size:8.9px;line-height:13px;color:#555;top:2.1px">备注</div>
<svg style="left:755px;top:2.9px" width="10" height="10" viewBox="0 0 10 10" fill="none" stroke="#6e6c6a" stroke-width="0.9"><path d="M0.5 0.5H9.5V7.3H4.2L1.8 9.6V7.3H0.5Z"/></svg>
<div class="a" style="top:2.6px;left:767.5px;font-size:8.9px;line-height:13px;color:#555;top:2.1px">批注</div>
<div class="a" style="left:800.5px;top:0px;width:29.5px;height:17px;background:#c8c6c4"></div>
<svg style="left:809px;top:3.0px" width="12" height="10" viewBox="0 0 12 10" fill="none" stroke="#55534f" stroke-width="0.85"><rect x="0.5" y="0.5" width="11" height="9"/><path d="M2.8 0.5V9.5M2.8 7.7H11.5"/><rect x="4.6" y="2.4" width="4.6" height="3.2"/></svg>
<svg style="left:840px;top:3.0px" width="11" height="10" viewBox="0 0 11 10" fill="none" stroke="#6e6c6a" stroke-width="0.9"><rect x="0.5" y="0.5" width="3.6" height="3.4"/><rect x="6.6" y="0.5" width="3.6" height="3.4"/><rect x="0.5" y="6" width="3.6" height="3.4"/><rect x="6.6" y="6" width="3.6" height="3.4"/></svg>
<svg style="left:869.5px;top:2.5px" width="11" height="11" viewBox="0 0 11 11" fill="none" stroke="#6e6c6a" stroke-width="0.9"><path d="M5.5 1.4C4 0.4 2 0.4 0.5 1V9.6C2 9 4 9 5.5 10C7 9 9 9 10.5 9.6V1C9 0.4 7 0.4 5.5 1.4ZM5.5 1.4V10M2 3H4M2 5H4M2 7H4M7 3H9M7 5H9M7 7H9" stroke-width="0.8"/></svg>
<svg style="left:899.5px;top:2.5px" width="10" height="11" viewBox="0 0 10 11" fill="none" stroke="#6e6c6a" stroke-width="0.9"><path d="M0 0.5H10M1 0.5V6.5H9V0.5M5 6.5V10M2.6 10.5H7.4M3.4 2.6H6.6"/></svg>
<div class="a" style="left:924px;top:7.5px;width:6.5px;height:1px;background:#999"></div>
<div class="a" style="left:934.5px;top:7.5px;width:75px;height:1px;background:#bdbbb9"></div>
<div class="a" style="left:972px;top:5.5px;width:1px;height:5px;background:#bdbbb9"></div>
<div class="a" style="left:965px;top:4.0px;width:4px;height:8.5px;background:#666"></div>
<svg style="left:1013px;top:4.9px" width="6" height="6" viewBox="0 0 6 6"><path d="M3 0V6M0 3H6" stroke="#999" stroke-width="0.9"/></svg>
<div class="a" style="top:2.6px;left:1028.5px;font-size:8.9px;line-height:13px;color:#555;font-size:9.4px;top:1.6px">86%</div>
<svg style="left:1057px;top:2.0px" width="12" height="12" viewBox="0 0 12 12" fill="none" stroke="#6e6c6a" stroke-width="0.9"><rect x="3.8" y="2.8" width="4.4" height="6.4"/><path d="M4.6 1.6L6 0.4L7.4 1.6M4.6 10.4L6 11.6L7.4 10.4M1.6 4.6L0.4 6L1.6 7.4M10.4 4.6L11.6 6L10.4 7.4"/></svg>
</div>
</div></body></html>
